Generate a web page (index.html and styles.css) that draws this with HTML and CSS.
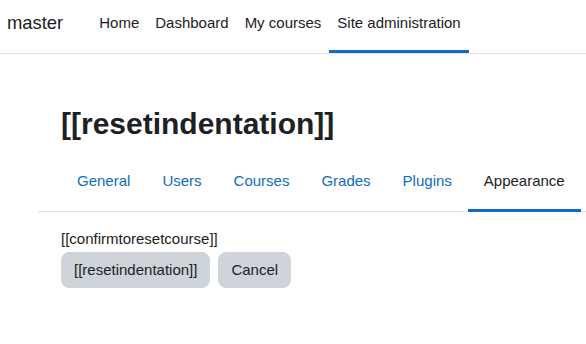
FILE: index.html
```html
<!DOCTYPE html>
<html lang="en">
  <head>
    <meta charset="UTF-8" />
    <title>[[resetindentation]]</title>
    <link rel="stylesheet" href="styles.css">
  </head>

  <body>
    <!-- top navigation -->
    <nav class="navbar">
      <a class="brand" href="#">master</a>
      <ul class="primary-nav">
        <li><a href="#">Home</a></li>
        <li><a href="#">Dashboard</a></li>
        <li><a href="#">My courses</a></li>
        <li><a class="active" href="#">Site administration</a></li>
      </ul>
    </nav>

    <div class="page">
      <header class="page-header">
        <h2>[[resetindentation]]</h2>
      </header>

      <!-- admin tabs -->
      <div class="secondary-nav">
        <ul class="tabs">
          <li><a href="#">General</a></li>
          <li><a href="#">Users</a></li>
          <li><a href="#">Courses</a></li>
          <li><a href="#">Grades</a></li>
          <li><a href="#">Plugins</a></li>
          <li><a class="active" href="#">Appearance</a></li>
        </ul>
      </div>

      <div class="confirm">
        <p class="confirm-text">[[confirmtoresetcourse]]</p>
        <div class="buttons">
          <button class="btn">[[resetindentation]]</button>
          <button class="btn">Cancel</button>
        </div>
      </div>
    </div>
  </body>
</html>
```

FILE: styles.css
```css
* {
    box-sizing: border-box;
    margin: 0;
    padding: 0;
}
body {
    font-family: "Liberation Sans", Arial, sans-serif;
    font-size: 15px;
    line-height: 1.5;
    color: #1d2125;
    background-color: #fff;
    overflow: hidden;
}
a {
    text-decoration: none;
}
ul {
    list-style: none;
}

/* 상단 네비게이션 */
.navbar {
    height: 54px;
    display: flex;
    align-items: flex-start;
    border-bottom: 1px solid #dee2e6;
    padding-left: 7px;
}
.brand {
    font-size: 18.4px;
    line-height: 22px;
    padding-top: 12px;
    color: #1d2125;
    margin-right: 28px;
}
.primary-nav {
    display: flex;
    height: 53px;
}
.primary-nav a {
    display: block;
    height: 53px;
    padding: 12px 8px 0;
    line-height: 22px;
    color: #1d2125;
    border-bottom: 3px solid transparent;
}
.primary-nav a.active {
    border-bottom-color: #0f6cbf;
}

/* 본문 */
.page {
    padding-left: 38px;
}
.page-header {
    padding-left: 23px;
    margin-top: 52px;
}
.page-header h2 {
    font-size: 30px;
    font-weight: bold;
    line-height: 36px;
}

/* 탭 */
.secondary-nav {
    margin-top: 16px;
    border-bottom: 1px solid #dee2e6;
    padding-left: 23px;
}
.tabs {
    display: flex;
}
.tabs a {
    display: block;
    padding: 12px 16px 17px;
    line-height: 22px;
    color: #0f6cbf;
    border-bottom: 3px solid transparent;
    margin-bottom: -1px;
}
.tabs a.active {
    color: #1d2125;
    border-bottom-color: #0f6cbf;
}

/* 확인 영역 */
.confirm {
    padding-left: 23px;
    margin-top: 16px;
}
.confirm-text {
    line-height: 22.5px;
    margin-bottom: 1px;
}
.buttons {
    display: flex;
    gap: 8px;
}
.btn {
    font-family: inherit;
    font-size: 15px;
    line-height: 22.5px;
    padding: 6px 12px;
    border: 1px solid #ced4da;
    border-radius: 8px;
    background-color: #ced4da;
    color: #1d2125;
    cursor: pointer;
}
```
